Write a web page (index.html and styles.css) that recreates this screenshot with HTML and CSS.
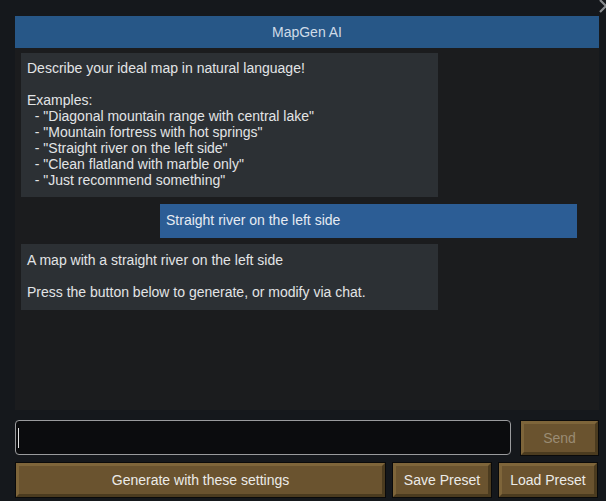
FILE: index.html
```html
<!DOCTYPE html>
<html>
<head>
<meta charset="utf-8">
<link rel="stylesheet" href="styles.css">
</head>
<body>
<div class="window">
  <svg class="close" width="14" height="18" viewBox="0 0 14 18"><path d="M2 1 L14 13 M2 13 L14 1" stroke="#8a8d90" stroke-width="2.2" fill="none"/></svg>
  <div class="title">MapGen AI</div>
  <div class="chat">
    <div class="msg bot first">Describe your ideal map in natural language!

Examples:
  - "Diagonal mountain range with central lake"
  - "Mountain fortress with hot springs"
  - "Straight river on the left side"
  - "Clean flatland with marble only"
  - "Just recommend something"</div>
    <div class="msg user">Straight river on the left side</div>
    <div class="msg bot reply">A map with a straight river on the left side

Press the button below to generate, or modify via chat.</div>
  </div>
  <div class="input-row">
    <div class="input"><span class="caret"></span></div>
    <div class="btn send">Send</div>
  </div>
  <div class="btn-row">
    <div class="btn generate">Generate with these settings</div>
    <div class="btn preset">Save Preset</div>
    <div class="btn preset">Load Preset</div>
  </div>
</div>
</body>
</html>
```

FILE: styles.css
```css
html, body {
  margin: 0;
  padding: 0;
  background: #15181c;
  width: 606px;
  height: 501px;
  overflow: hidden;
  font-family: "Liberation Sans", Arial, sans-serif;
}
.window {
  position: relative;
  padding: 16px 7px 0 15px;
  display: flex;
  flex-direction: column;
}
.close {
  position: absolute;
  right: -6px;
  top: -1px;
}
.title {
  height: 32px;
  background: #275787;
  color: #cfdbe8;
  font-size: 14px;
  display: flex;
  align-items: center;
  justify-content: center;
}
.chat {
  height: 362px;
  background: #1b1c1e;
  padding: 5px 22px 0 6px;
  box-sizing: border-box;
  display: flex;
  flex-direction: column;
  gap: 6px;
}
.msg {
  width: 417px;
  box-sizing: border-box;
  white-space: pre;
  font-size: 14px;
  line-height: 16px;
  color: #e2e4e6;
  padding: 7px 6px 9px 6px;
}
.bot {
  background: #2c3034;
}
.reply {
  padding: 8px 6px 10px 6px;
}
.user {
  background: #2c5d95;
  align-self: flex-end;
  margin-top: 1px;
  padding: 8px 6px 10px 6px;
  color: #e6ebf2;
}
.input-row {
  margin-top: 10px;
  display: flex;
  gap: 10px;
  height: 35px;
}
.input {
  flex: 1;
  background: #0b0c0e;
  border: 1px solid #9a9b9d;
  border-radius: 4px;
  display: flex;
  align-items: center;
  padding-left: 2px;
}
.caret {
  width: 1px;
  height: 20px;
  background: #e0e0e0;
}
.btn {
  box-sizing: border-box;
  background: #6a532f;
  border: 3px solid;
  border-color: #7e653a #4b3b1f #4b3b1f #7e653a;
  box-shadow: 0 0 0 1px #0a0a0a;
  color: #ecebe8;
  font-size: 14px;
  display: flex;
  align-items: center;
  justify-content: center;
}
.send {
  width: 77px;
  margin: 1px 1px 0 0;
  color: #9a8c74;
}
.btn-row {
  margin-top: 8px;
  display: flex;
  gap: 8px;
  height: 34px;
  padding: 0 1px 0 1px;
}
.generate {
  width: 369px;
}
.preset {
  width: 98px;
}
```
